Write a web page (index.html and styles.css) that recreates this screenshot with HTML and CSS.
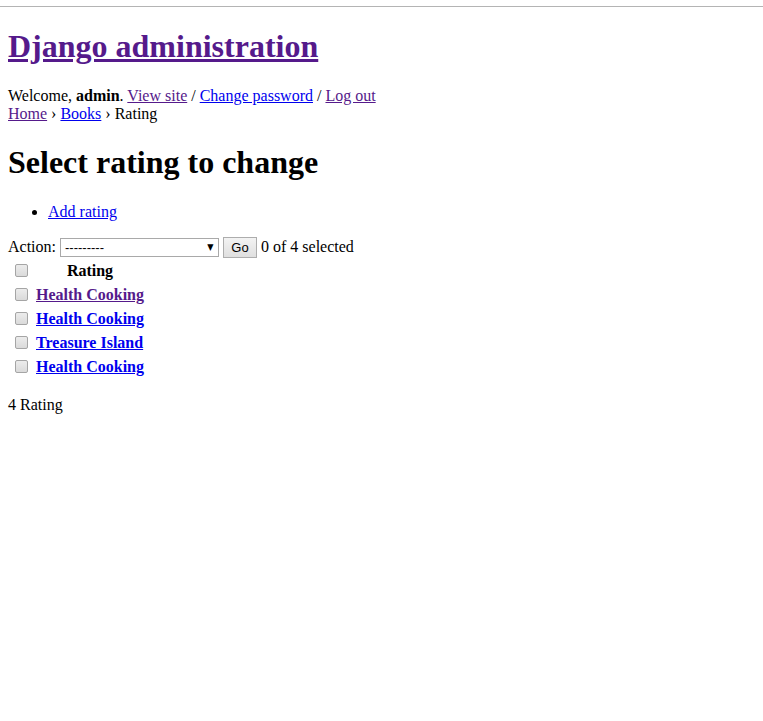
FILE: index.html
```html
<!DOCTYPE html>
<html>
<head>
<meta charset="utf-8">
<title>Select rating to change | Django site admin</title>
<link rel="stylesheet" href="styles.css">
</head>
<body>
<div class="chrome"></div>
<div class="container">
  <div class="header">
    <div class="branding"><h1 class="site-name"><a class="visited" href="#">Django administration</a></h1></div>
    <div class="user-tools">Welcome, <strong>admin</strong>. <a class="visited" href="#">View site</a> / <a href="#">Change password</a> / <a class="visited" href="#">Log out</a></div>
  </div>
  <div class="breadcrumbs"><a class="visited" href="#">Home</a> › <a href="#">Books</a> › Rating</div>
  <div class="content">
    <h1 class="page-title">Select rating to change</h1>
    <div class="content-main">
      <ul class="object-tools"><li><a href="#">Add rating</a></li></ul>
      <div class="changelist">
        <div class="actions">
          <label class="action-label">Action: <span class="select-wrap"><span class="select">---------</span><span class="select-arrow">▼</span></span></label>
          <span class="button">Go</span>
          <span class="action-counter">0 of 4 selected</span>
        </div>
        <table class="result-list">
          <thead>
            <tr><th class="cb-head"><span class="cb"></span></th><th class="col-head">Rating</th></tr>
          </thead>
          <tbody>
            <tr><td class="cb-cell"><span class="cb"></span></td><th class="name"><a class="visited" href="#">Health Cooking</a></th></tr>
            <tr><td class="cb-cell"><span class="cb"></span></td><th class="name"><a href="#">Health Cooking</a></th></tr>
            <tr><td class="cb-cell"><span class="cb"></span></td><th class="name"><a href="#">Treasure Island</a></th></tr>
            <tr><td class="cb-cell"><span class="cb"></span></td><th class="name"><a href="#">Health Cooking</a></th></tr>
          </tbody>
        </table>
        <p class="paginator">4 Rating</p>
      </div>
    </div>
  </div>
</div>
</body>
</html>
```

FILE: styles.css
```css
html, body {
  margin: 0;
  padding: 0;
  background: #fff;
}
body {
  font-family: "Liberation Serif", "Times New Roman", serif;
  font-size: 16px;
  color: #000;
}
.chrome {
  height: 6px;
  border-bottom: 1px solid #b4b4b4;
}
.container {
  padding: 0 8px;
}
a {
  color: #0000ee;
}
a.visited {
  color: #551a8b;
}
h1 {
  font-size: 32px;
  font-weight: bold;
  margin: 21.44px 0;
}
.user-tools, .breadcrumbs {
  line-height: 18px;
}
.object-tools {
  margin: 16px 0;
  padding-left: 40px;
}
.object-tools li {
  line-height: 18px;
}
.actions {
  display: flex;
  align-items: center;
  height: 21px;
  margin-top: 16px;
  line-height: 18px;
}
.action-label {
  display: flex;
  align-items: center;
}
.select-wrap {
  position: relative;
  display: inline-block;
  margin-left: 4px;
}
.select {
  display: block;
  box-sizing: border-box;
  width: 159px;
  height: 19px;
  border: 1px solid #a9a9a9;
  background: #fff;
  font-family: "Liberation Sans", Arial, sans-serif;
  font-size: 13px;
  line-height: 17px;
  padding-left: 4px;
}
.select-arrow {
  position: absolute;
  right: 5px;
  top: 3px;
  font-family: "DejaVu Sans", sans-serif;
  font-size: 9px;
  line-height: 12px;
  color: #000;
  transform: scaleX(0.9);
}
.button {
  display: inline-block;
  box-sizing: border-box;
  margin-left: 4px;
  height: 21px;
  width: 34px;
  border: 1px solid #adadad;
  background: linear-gradient(#f3f3f3, #dfdfdf);
  font-family: "Liberation Sans", Arial, sans-serif;
  font-size: 13px;
  line-height: 19px;
  text-align: center;
}
.action-counter {
  margin-left: 4px;
}
.result-list {
  border-spacing: 2px;
  margin-top: 0;
}
.result-list th, .result-list td {
  padding: 1px;
  height: 20px;
  vertical-align: middle;
}
.cb-head, .cb-cell {
  text-align: left;
}
.col-head {
  text-align: center;
}
.name {
  text-align: left;
}
.cb {
  display: block;
  box-sizing: border-box;
  width: 13px;
  height: 13px;
  margin: 3px 4px 3px 4px;
  border: 1px solid #a5a5a5;
  border-radius: 2px;
  background: linear-gradient(#ececec, #dadada);
}
.paginator {
  margin: 16px 0;
  line-height: 18px;
}
```
